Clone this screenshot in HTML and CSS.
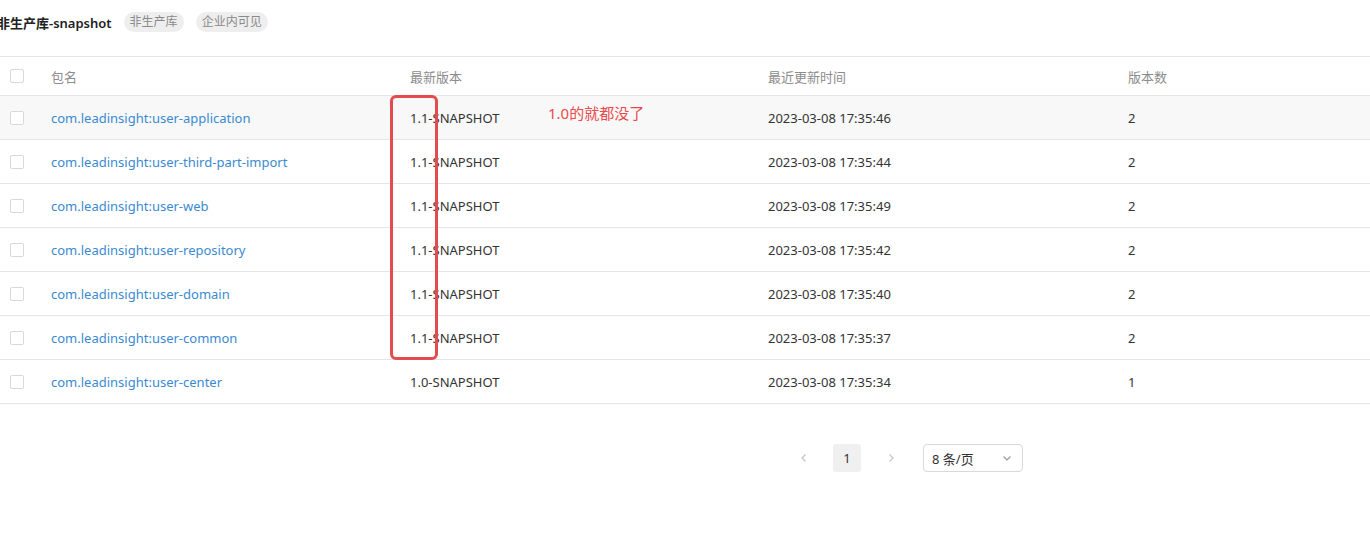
FILE: index.html
```html
<!DOCTYPE html>
<html lang="zh">
<head>
<meta charset="utf-8">
<title>非生产库-snapshot</title>
<link rel="stylesheet" href="styles.css">
</head>
<body>
<div class="page">
  <div class="head">
    <span class="title">非生产库-snapshot</span>
    <span class="tag">非生产库</span>
    <span class="tag">企业内可见</span>
  </div>
  <div class="table">
    <div class="row thead">
      <div class="cell chk"><span class="box"></span></div>
      <div class="cell">包名</div>
      <div class="cell">最新版本</div>
      <div class="cell">最近更新时间</div>
      <div class="cell">版本数</div>
    </div>
    <div class="row hover">
      <div class="cell chk"><span class="box"></span></div>
      <div class="cell link">com.leadinsight:user-application</div>
      <div class="cell">1.1-SNAPSHOT</div>
      <div class="cell">2023-03-08 17:35:46</div>
      <div class="cell">2</div>
    </div>
    <div class="row">
      <div class="cell chk"><span class="box"></span></div>
      <div class="cell link">com.leadinsight:user-third-part-import</div>
      <div class="cell">1.1-SNAPSHOT</div>
      <div class="cell">2023-03-08 17:35:44</div>
      <div class="cell">2</div>
    </div>
    <div class="row">
      <div class="cell chk"><span class="box"></span></div>
      <div class="cell link">com.leadinsight:user-web</div>
      <div class="cell">1.1-SNAPSHOT</div>
      <div class="cell">2023-03-08 17:35:49</div>
      <div class="cell">2</div>
    </div>
    <div class="row">
      <div class="cell chk"><span class="box"></span></div>
      <div class="cell link">com.leadinsight:user-repository</div>
      <div class="cell">1.1-SNAPSHOT</div>
      <div class="cell">2023-03-08 17:35:42</div>
      <div class="cell">2</div>
    </div>
    <div class="row">
      <div class="cell chk"><span class="box"></span></div>
      <div class="cell link">com.leadinsight:user-domain</div>
      <div class="cell">1.1-SNAPSHOT</div>
      <div class="cell">2023-03-08 17:35:40</div>
      <div class="cell">2</div>
    </div>
    <div class="row">
      <div class="cell chk"><span class="box"></span></div>
      <div class="cell link">com.leadinsight:user-common</div>
      <div class="cell">1.1-SNAPSHOT</div>
      <div class="cell">2023-03-08 17:35:37</div>
      <div class="cell">2</div>
    </div>
    <div class="row">
      <div class="cell chk"><span class="box"></span></div>
      <div class="cell link">com.leadinsight:user-center</div>
      <div class="cell">1.0-SNAPSHOT</div>
      <div class="cell">2023-03-08 17:35:34</div>
      <div class="cell">1</div>
    </div>
    <div class="mark"></div>
    <div class="note">1.0的就都没了</div>
  </div>
  <div class="pager">
    <span class="arrow prev"><svg width="12" height="12" viewBox="0 0 12 12"><path d="M7.5 2.5 L4 6 L7.5 9.5" fill="none" stroke="#c4c4c4" stroke-width="1.2"/></svg></span>
    <span class="pg">1</span>
    <span class="arrow next"><svg width="12" height="12" viewBox="0 0 12 12"><path d="M4.5 2.5 L8 6 L4.5 9.5" fill="none" stroke="#c4c4c4" stroke-width="1.2"/></svg></span>
    <span class="select"><span>8 条/页</span><svg width="12" height="12" viewBox="0 0 12 12"><path d="M2.5 4.5 L6 8 L9.5 4.5" fill="none" stroke="#999" stroke-width="1.2"/></svg></span>
  </div>
</div>
</body>
</html>
```
FILE: styles.css
```css
html, body {
  margin: 0;
  padding: 0;
  background: #fff;
}
body {
  font-family: "Noto Sans", "Noto Sans CJK SC", sans-serif;
  font-size: 13px;
  color: #333;
  width: 1370px;
  height: 544px;
  overflow: hidden;
}
.head {
  display: flex;
  align-items: center;
  height: 32px;
  padding-top: 6px;
  padding-bottom: 18px;
  margin-left: -3px;
  border-bottom: 1px solid #e6e6e6;
}
.title {
  font-weight: 600;
  color: #222;
  font-size: 13px;
  margin-right: 12px;
}
.tag {
  background: #eeeeee;
  color: #8a8a8a;
  font-size: 12px;
  height: 20px;
  line-height: 20px;
  padding: 0 6px;
  border-radius: 10px;
  margin-right: 12px;
}
.table {
  position: relative;
}
.row {
  display: grid;
  grid-template-columns: 51px 359px 358px 360px 1fr;
  height: 43px;
  align-items: center;
  border-bottom: 1px solid #e6e6e6;
}
.thead {
  height: 38px;
  color: #8c8c8c;
}
.hover {
  background: #f8f8f8;
}
.cell {
  white-space: nowrap;
}
.chk {
  padding-left: 10px;
  display: flex;
  align-items: center;
}
.box {
  width: 12px;
  height: 12px;
  border: 1px solid #d9d9d9;
  border-radius: 2px;
  background: #fff;
}
.link {
  color: #3a8ad1;
}
.mark {
  position: absolute;
  left: 390px;
  top: 38px;
  width: 42px;
  height: 259px;
  border: 3px solid #e34b4e;
  border-radius: 6px;
}
.note {
  position: absolute;
  left: 548px;
  top: 45px;
  color: #e84b4b;
  font-size: 15px;
}
.pager {
  display: flex;
  align-items: center;
  margin-top: 40px;
  padding-left: 790px;
  height: 28px;
}
.arrow {
  width: 28px;
  height: 28px;
  display: flex;
  align-items: center;
  justify-content: center;
}
.prev { margin-right: 15px; }
.next { margin-left: 16px; margin-right: 18px; }
.pg {
  width: 28px;
  height: 28px;
  line-height: 28px;
  text-align: center;
  background: #f0f0f0;
  border-radius: 3px;
  color: #333;
}
.select {
  width: 100px;
  height: 28px;
  box-sizing: border-box;
  border: 1px solid #d9d9d9;
  border-radius: 4px;
  display: flex;
  align-items: center;
  justify-content: space-between;
  padding: 0 9px 0 8px;
  font-size: 13px;
  color: #333;
}
```
